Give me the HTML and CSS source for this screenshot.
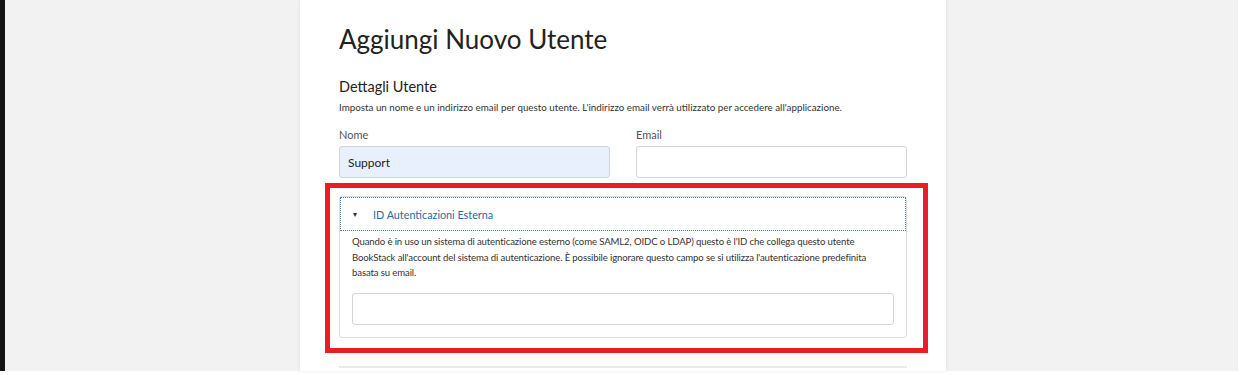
FILE: index.html
```html
<!DOCTYPE html>
<html lang="it">
<head>
    <meta charset="UTF-8" />
    <title>Aggiungi Nuovo Utente</title>
    <link rel="stylesheet" href="styles.css">
</head>
<body>
    <div class="page">
        <div class="card">
            <h1>Aggiungi Nuovo Utente</h1>

            <h2>Dettagli Utente</h2>
            <p class="desc">Imposta un nome e un indirizzo email per questo utente. L'indirizzo email verrà utilizzato per accedere all'applicazione.</p>

            <div class="fields">
                <div class="field">
                    <label>Nome</label>
                    <input class="input autofill" type="text" value="Support">
                </div>
                <div class="field">
                    <label>Email</label>
                    <input class="input" type="text">
                </div>
            </div>

            <div class="collapse">
                <div class="summary">
                    <span class="caret">&#9662;</span>
                    <span>ID Autenticazioni Esterna</span>
                </div>
                <div class="collapse-body">
                    <p>Quando è in uso un sistema di autenticazione esterno (come SAML2, OIDC o LDAP) questo è l'ID che collega questo utente BookStack all'account del sistema di autenticazione. È possibile ignorare questo campo se si utilizza l'autenticazione predefinita basata su email.</p>
                    <input class="input" type="text">
                </div>
                <div class="highlight"></div>
            </div>

            <hr class="divider">
        </div>
    </div>
</body>
</html>
```

FILE: styles.css
```css
html, body {
    margin: 0;
    height: 100%;
}
body {
    font-family: Lato, 'Liberation Sans', sans-serif;
    color: #222;
    background: #fff;
    overflow: hidden;
}
.page {
    height: 371px;
    margin-right: 3px;
    border-left: 5px solid #141414;
    background: #f2f2f2;
    display: flex;
}
.card {
    width: 568px;
    margin-left: 295px;
    padding: 0 39px;
    background: #fff;
    box-shadow: 0 0 4px rgba(0, 0, 0, 0.08);
}
h1 {
    font-weight: 400;
    font-size: 26px;
    margin: 21px 0 0;
    line-height: 36px;
    color: #222;
}
h2 {
    font-weight: 400;
    font-size: 14.5px;
    margin: 20px 0 0;
    line-height: 20px;
}
.desc {
    font-size: 9.8px;
    margin: 2px 0 0;
    line-height: 16px;
    color: #333;
}
.fields {
    display: flex;
    gap: 26px;
    margin-top: 12px;
}
.field {
    flex: 1;
}
label {
    display: block;
    font-size: 11px;
    color: #555;
    line-height: 16px;
    margin-bottom: 3px;
}
.input {
    display: block;
    box-sizing: border-box;
    width: 100%;
    height: 32px;
    border: 1px solid #d4d4d4;
    border-radius: 3px;
    background: #fff;
    font-family: inherit;
    font-size: 12px;
    padding: 0 8px;
    color: #222;
}
.input.autofill {
    background: #e8f0fe;
}
.collapse {
    position: relative;
    margin-top: 18px;
    border: 1px solid #ddd;
    border-radius: 3px;
}
.summary {
    display: flex;
    align-items: center;
    height: 34px;
    outline: 1px dotted #4a7fa8;
    outline-offset: -1px;
    font-size: 10.8px;
    color: #206ea7;
}
.caret {
    font-size: 8px;
    color: #333;
    width: 20px;
    margin-left: 13px;
}
.collapse-body {
    padding: 3px 12px 12px;
}
.collapse-body p {
    max-width: 532px;
    font-size: 9.6px;
    letter-spacing: -0.13px;
    line-height: 15.5px;
    margin: 0 0 12px;
    color: #333;
}
.highlight {
    position: absolute;
    left: -15px;
    right: -22px;
    top: -14px;
    bottom: -16px;
    border: 5px solid #ea1c24;
}
.divider {
    border: 0;
    border-top: 2px solid #eaeaea;
    margin: 28px 0 0;
}
```
